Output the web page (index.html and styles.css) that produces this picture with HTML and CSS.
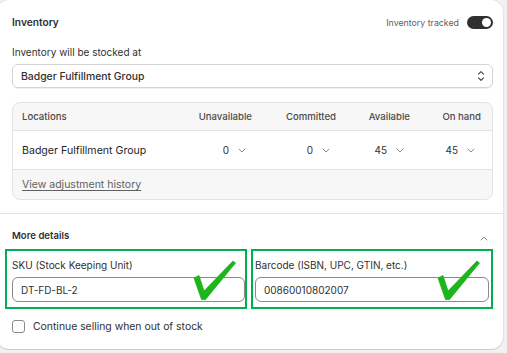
FILE: index.html
```html
<!DOCTYPE html>
<html lang="en">
<head>
<meta charset="utf-8">
<title>Inventory</title>
<link rel="stylesheet" href="styles.css">
</head>
<body>
<div class="card">
  <section class="section top">
    <div class="head-row">
      <h2 class="title">Inventory</h2>
      <div class="tracked">
        <span class="tracked-label">Inventory tracked</span>
        <span class="toggle"><span class="knob"></span></span>
      </div>
    </div>
    <div class="label stocked">Inventory will be stocked at</div>
    <div class="select">
      <span class="select-text">Badger Fulfillment Group</span>
      <svg class="updown" width="8" height="12" viewBox="0 0 8 12"><path d="M1.5 4.2 L4 1.7 L6.5 4.2 M1.5 7.8 L4 10.3 L6.5 7.8" fill="none" stroke="#4a4a4a" stroke-width="1.2" stroke-linecap="round" stroke-linejoin="round"/></svg>
    </div>
    <div class="table">
      <div class="trow thead">
        <div class="cell first">Locations</div>
        <div class="cell num">Unavailable</div>
        <div class="cell num">Committed</div>
        <div class="cell num">Available</div>
        <div class="cell num">On hand</div>
      </div>
      <div class="trow tbody">
        <div class="cell first">Badger Fulfillment Group</div>
        <div class="cell val"><span class="v">0</span><svg class="chev" width="8" height="5" viewBox="0 0 8 5"><path d="M1 1 L4 4 L7 1" fill="none" stroke="#8a8a8a" stroke-width="1" stroke-linecap="round" stroke-linejoin="round"/></svg></div>
        <div class="cell val"><span class="v">0</span><svg class="chev" width="8" height="5" viewBox="0 0 8 5"><path d="M1 1 L4 4 L7 1" fill="none" stroke="#8a8a8a" stroke-width="1" stroke-linecap="round" stroke-linejoin="round"/></svg></div>
        <div class="cell val"><span class="v">45</span><svg class="chev" width="8" height="5" viewBox="0 0 8 5"><path d="M1 1 L4 4 L7 1" fill="none" stroke="#8a8a8a" stroke-width="1" stroke-linecap="round" stroke-linejoin="round"/></svg></div>
        <div class="cell val"><span class="v">45</span><svg class="chev" width="8" height="5" viewBox="0 0 8 5"><path d="M1 1 L4 4 L7 1" fill="none" stroke="#8a8a8a" stroke-width="1" stroke-linecap="round" stroke-linejoin="round"/></svg></div>
      </div>
      <div class="tfoot">
        <a class="history">View adjustment history</a>
      </div>
    </div>
  </section>
  <section class="section bottom">
    <div class="more-row">
      <h3 class="title small">More details</h3>
      <svg class="chev-up" width="8" height="5" viewBox="0 0 8 5"><path d="M1 4 L4 1 L7 4" fill="none" stroke="#8a8a8a" stroke-width="1" stroke-linecap="round" stroke-linejoin="round"/></svg>
    </div>
    <div class="fields">
      <div class="field sku">
        <div class="label">SKU (Stock Keeping Unit)</div>
        <div class="input">DT-FD-BL-2</div>
        <svg class="check check-sku" width="44" height="42" viewBox="0 0 44 42"><path d="M1 19 L6 16.5 L11 32 L40 2 L42.5 4 L12.5 40.5 L8.5 40.5 Z" fill="#1db41d" stroke="#1db41d" stroke-width="0.8" stroke-linejoin="round"/></svg>
      </div>
      <div class="field barcode">
        <div class="label">Barcode (ISBN, UPC, GTIN, etc.)</div>
        <div class="input">00860010802007</div>
        <svg class="check check-bar" width="44" height="42" viewBox="0 0 44 42"><path d="M1 19 L6 16.5 L11 32 L40 2 L42.5 4 L12.5 40.5 L8.5 40.5 Z" fill="#1db41d" stroke="#1db41d" stroke-width="0.8" stroke-linejoin="round"/></svg>
      </div>
    </div>
    <label class="checkrow">
      <span class="checkbox"></span>
      <span class="check-label">Continue selling when out of stock</span>
    </label>
  </section>
</div>
</body>
</html>
```

FILE: styles.css
```css
* { box-sizing: border-box; }
html, body { margin: 0; padding: 0; }
body {
  background: #f1f1f1;
  font-family: Inter, "Noto Sans", "Liberation Sans", sans-serif;
  font-size: 10px;
  color: #303030;
  width: 507px;
  height: 353px;
  overflow: hidden;
}
.card {
  width: 506px;
  margin-left: -3px;
  height: 349px;
  background: #fff;
  border-radius: 12px;
  box-shadow: 0 1px 0 rgba(0,0,0,0.10), 0 0 0 1px rgba(0,0,0,0.05);
  overflow: hidden;
}
.section { padding: 0 10px 0 15px; }
.top { padding-top: 12px; padding-bottom: 13px; border-bottom: 1px solid #e3e3e3; }
.head-row {
  display: flex;
  align-items: center;
  justify-content: space-between;
  height: 20px;
}
.title {
  margin: 0;
  font-size: 10.2px;
  font-weight: 600;
  color: #303030;
  line-height: 14px;
}
.tracked { display: flex; align-items: center; gap: 8px; }
.tracked-label { color: #616161; font-size: 8.8px; }
.toggle {
  width: 26px;
  height: 13px;
  border-radius: 7px;
  background: #303030;
  display: flex;
  align-items: center;
  justify-content: flex-end;
  padding-right: 2px;
}
.knob { width: 9px; height: 9px; border-radius: 50%; background: #fff; }
.label { line-height: 14px; color: #303030; }
.stocked { margin-top: 13px; }
.select {
  margin-top: 5px;
  height: 24px;
  border: 1px solid #d4d4d4;
  border-radius: 6px;
  display: flex;
  align-items: center;
  justify-content: space-between;
  padding: 0 7px 0 8px;
  box-shadow: 0 1px 0 rgba(0,0,0,0.06);
}
.select-text { font-weight: 500; font-size: 10.4px; }
.updown { display: block; }
.table {
  margin-top: 14px;
  border: 1px solid #e3e3e3;
  border-radius: 8px;
  background: #f7f7f7;
  overflow: hidden;
}
.trow {
  display: grid;
  grid-template-columns: 1fr 84px 84px 74px 71px;
  align-items: center;
  padding: 0 11px 0 9px;
}
.thead { height: 28px; color: #4a4a4a; font-weight: 500; font-size: 9.6px; border-bottom: 1px solid #e3e3e3; }
.tbody { height: 39px; background: #fff; border-bottom: 1px solid #e3e3e3; font-size: 10.6px; }
.tbody .first { font-weight: 400; color: #1f1f1f; }
.cell.num { text-align: right; }
.cell.val {
  display: flex;
  justify-content: flex-end;
  align-items: center;
  gap: 9px;
  padding-right: 6px;
  color: #303030;
  font-size: 10px;
}
.chev { display: block; }
.tfoot { height: 29px; display: flex; align-items: center; padding-left: 9px; }
.history { color: #616161; text-decoration: underline; text-underline-offset: 2px; font-size: 10.5px; }
.bottom { padding-top: 15px; padding-bottom: 15px; }
.more-row { display: flex; align-items: center; justify-content: space-between; padding-right: 5px; }
.title.small { font-size: 9.6px; }
.chev-up { display: block; margin-top: 5px; }
.fields {
  margin-top: 6px;
  margin-left: -7px;
  display: flex;
  gap: 4px;
}
.field {
  position: relative;
  height: 60px;
  border: 2px solid #00b050;
  padding: 7px 0 5px 5px;
}
.sku { width: 244px; padding-left: 5px; padding-right: 0; }
.barcode { width: 244px; padding-left: 2px; padding-right: 2px; }
.input {
  margin-top: 5px;
  height: 25px;
  border: 1px solid #8a8a8a;
  border-radius: 6px;
  display: flex;
  align-items: center;
  padding-left: 8px;
  color: #303030;
}
.check { position: absolute; top: 8px; }
.check-sku { left: 186px; }
.check-bar { left: 184px; }
.checkrow { display: flex; align-items: center; gap: 8px; margin-top: 11px; height: 13px; }
.checkbox {
  width: 13px;
  height: 13px;
  border: 1px solid #8a8a8a;
  border-radius: 3px;
  background: #fff;
}
.check-label { color: #303030; font-size: 10.4px; }
```
